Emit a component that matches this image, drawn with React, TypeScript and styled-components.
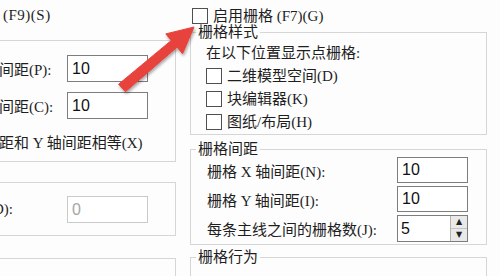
import React from "react";
import styled, { createGlobalStyle } from "styled-components";

const Global = createGlobalStyle`
  html, body { margin: 0; padding: 0; background: #fdfdfd; }
  body {
    font-family: "Liberation Serif", "Noto Sans CJK SC", serif;
    color: #1e1e1e;
  }
`;

const Page = styled.div`
  position: relative;
  width: 500px;
  height: 276px;
  overflow: hidden;
  display: flex;
  background: #fdfdfd;
  font-size: 15px;
`;

const LeftCol = styled.div`
  width: 190px;
  flex: none;
  display: flex;
  flex-direction: column;
`;

const RightCol = styled.div`
  flex: 1;
  display: flex;
  flex-direction: column;
`;

const TopText = styled.div`
  height: 30px;
  line-height: 30px;
  padding-left: 3px;
  white-space: nowrap;
  letter-spacing: 0.5px;
`;

const Group = styled.fieldset<{ $mt: number; $left?: boolean }>`
  box-sizing: border-box;
  margin: ${(p) => p.$mt}px 0 0 ${(p) => (p.$left ? -10 : 0)}px;
  width: ${(p) => (p.$left ? 186 : 297)}px;
  padding: 0;
  min-width: 0;
  border: 1px solid #d6d6d6;
  flex: none;
`;

const Legend = styled.legend`
  margin-left: 5px;
  padding: 0 2px;
  line-height: 16px;
  white-space: nowrap;
`;

const Body = styled.div<{ $pad: string }>`
  padding: ${(p) => p.$pad};
  display: flex;
  flex-direction: column;
`;

const LeftRow = styled.div<{ $mt?: number }>`
  display: grid;
  grid-template-columns: 67px 81px;
  align-items: center;
  height: 27px;
  margin-top: ${(p) => p.$mt ?? 0}px;
  white-space: nowrap;
`;

const Label = styled.span<{ $shift?: number }>`
  white-space: nowrap;
  margin-left: ${(p) => p.$shift ?? 0}px;
`;

const LineText = styled.div<{ $h: number; $mt?: number }>`
  line-height: ${(p) => p.$h}px;
  height: ${(p) => p.$h}px;
  margin-top: ${(p) => p.$mt ?? 0}px;
  white-space: nowrap;
`;

const Field = styled.input<{ $w: number; $h?: number; $disabled?: boolean }>`
  box-sizing: border-box;
  width: ${(p) => p.$w}px;
  height: ${(p) => p.$h ?? 27}px;
  margin: 0;
  padding: 0 4px;
  border: 1px solid ${(p) => (p.$disabled ? "#cacaca" : "#7d7d7d")};
  border-radius: 0;
  background: #fff;
  font-family: "Liberation Sans", Arial, sans-serif;
  font-size: 16px;
  color: ${(p) => (p.$disabled ? "#a6a6a6" : "#111")};
  outline: none;
`;

const CheckRow = styled.div<{ $h: number; $pt?: number; $pl?: number }>`
  box-sizing: border-box;
  height: ${(p) => p.$h}px;
  padding-top: ${(p) => p.$pt ?? 0}px;
  padding-left: ${(p) => p.$pl ?? 0}px;
  display: flex;
  align-items: ${(p) => (p.$pt ? "flex-start" : "center")};
  gap: 5px;
  white-space: nowrap;
  line-height: 16px;
`;

const Box = styled.span`
  box-sizing: border-box;
  width: 16px;
  height: 16px;
  flex: none;
  border: 1px solid #4f4f4f;
  background: #fff;
`;

const SpaceRow = styled.div<{ $h: number; $mt?: number }>`
  display: grid;
  grid-template-columns: 190px 71px;
  align-items: center;
  height: ${(p) => p.$h}px;
  margin-top: ${(p) => p.$mt ?? 0}px;
  white-space: nowrap;
`;

const Spinner = styled.div`
  box-sizing: border-box;
  width: 71px;
  height: 27px;
  display: flex;
  border: 1px solid #7d7d7d;
  background: #fff;
`;

const SpinValue = styled.span`
  flex: 1;
  padding-left: 3px;
  font-family: "Liberation Sans", Arial, sans-serif;
  font-size: 16px;
  line-height: 25px;
  color: #111;
`;

const SpinButtons = styled.div`
  width: 16px;
  display: flex;
  flex-direction: column;
  border-left: 1px solid #b4b4b4;
`;

const SpinBtn = styled.span<{ $down?: boolean }>`
  flex: 1;
  display: flex;
  align-items: center;
  justify-content: center;
  background: #e9e9e9;
  border-top: ${(p) => (p.$down ? "1px solid #c4c4c4" : "none")};
  font-size: 8px;
  line-height: 1;
  color: #222;
  font-family: "DejaVu Sans", sans-serif;
`;

const Overlay = styled.svg`
  position: absolute;
  left: 0;
  top: 0;
  pointer-events: none;
`;

export default function App() {
  return (
    <>
      <Global />
      <Page>
        <LeftCol>
          <TopText>(F9)(S)</TopText>
          <Group $mt={10} $left>
            <Body $pad="14px 0 8px 9px">
              <LeftRow>
                <Label $shift={-1}>间距(P):</Label>
                <Field $w={81} readOnly value="10" />
              </LeftRow>
              <LeftRow $mt={10}>
                <Label $shift={-1}>间距(C):</Label>
                <Field $w={81} readOnly value="10" />
              </LeftRow>
              <LineText $h={20} $mt={14}>
                <Label $shift={-1}>距和 Y 轴间距相等(X)</Label>
              </LineText>
            </Body>
          </Group>
          <Group $mt={20} $left>
            <Body $pad="13px 0 12px 9px">
              <LeftRow>
                <Label $shift={-12}>(D):</Label>
                <Field $w={81} $disabled readOnly value="0" />
              </LeftRow>
            </Body>
          </Group>
          <Group $mt={22} $left>
            <Body $pad="0 0 40px 9px" />
          </Group>
        </LeftCol>

        <RightCol>
          <CheckRow $h={32} $pt={8} $pl={2}>
            <Box />
            <span>启用栅格 (F7)(G)</span>
          </CheckRow>
          <Group $mt={0}>
            <Legend>栅格样式</Legend>
            <Body $pad="2px 0 1px 15px">
              <LineText $h={22}>在以下位置显示点栅格:</LineText>
              <CheckRow $h={23}>
                <Box />
                <span>二维模型空间(D)</span>
              </CheckRow>
              <CheckRow $h={23}>
                <Box />
                <span>块编辑器(K)</span>
              </CheckRow>
              <CheckRow $h={23}>
                <Box />
                <span>图纸/布局(H)</span>
              </CheckRow>
            </Body>
          </Group>
          <Group $mt={6}>
            <Legend>栅格间距</Legend>
            <Body $pad="0 0 2px 16px">
              <SpaceRow $h={26}>
                <span>栅格 X 轴间距(N):</span>
                <Field $w={71} $h={26} readOnly value="10" />
              </SpaceRow>
              <SpaceRow $h={26} $mt={3}>
                <span>栅格 Y 轴间距(I):</span>
                <Field $w={71} $h={26} readOnly value="10" />
              </SpaceRow>
              <SpaceRow $h={27} $mt={3}>
                <span>每条主线之间的栅格数(J):</span>
                <Spinner>
                  <SpinValue>5</SpinValue>
                  <SpinButtons>
                    <SpinBtn>▲</SpinBtn>
                    <SpinBtn $down>▼</SpinBtn>
                  </SpinButtons>
                </Spinner>
              </SpaceRow>
            </Body>
          </Group>
          <Group $mt={4}>
            <Legend>栅格行为</Legend>
            <Body $pad="0 0 40px 16px" />
          </Group>
        </RightCol>

        <Overlay width={500} height={276} viewBox="0 0 500 276">
          <defs>
            <filter id="sh" x="-20%" y="-20%" width="140%" height="140%">
              <feGaussianBlur in="SourceAlpha" stdDeviation="1.5" />
              <feOffset dx="1" dy="1.5" result="b" />
              <feComponentTransfer>
                <feFuncA type="linear" slope="0.35" />
              </feComponentTransfer>
              <feMerge>
                <feMergeNode />
                <feMergeNode in="SourceGraphic" />
              </feMerge>
            </filter>
          </defs>
          <polygon
            filter="url(#sh)"
            fill="#e8423d"
            points="118.6,84.2 171.3,40.4 165.8,33.9 194,27 182.6,53.7 177.1,47.2 125.4,91.8"
            strokeLinejoin="round"
            stroke="#e8423d"
            strokeWidth={1}
          />
        </Overlay>
      </Page>
    </>
  );
}
